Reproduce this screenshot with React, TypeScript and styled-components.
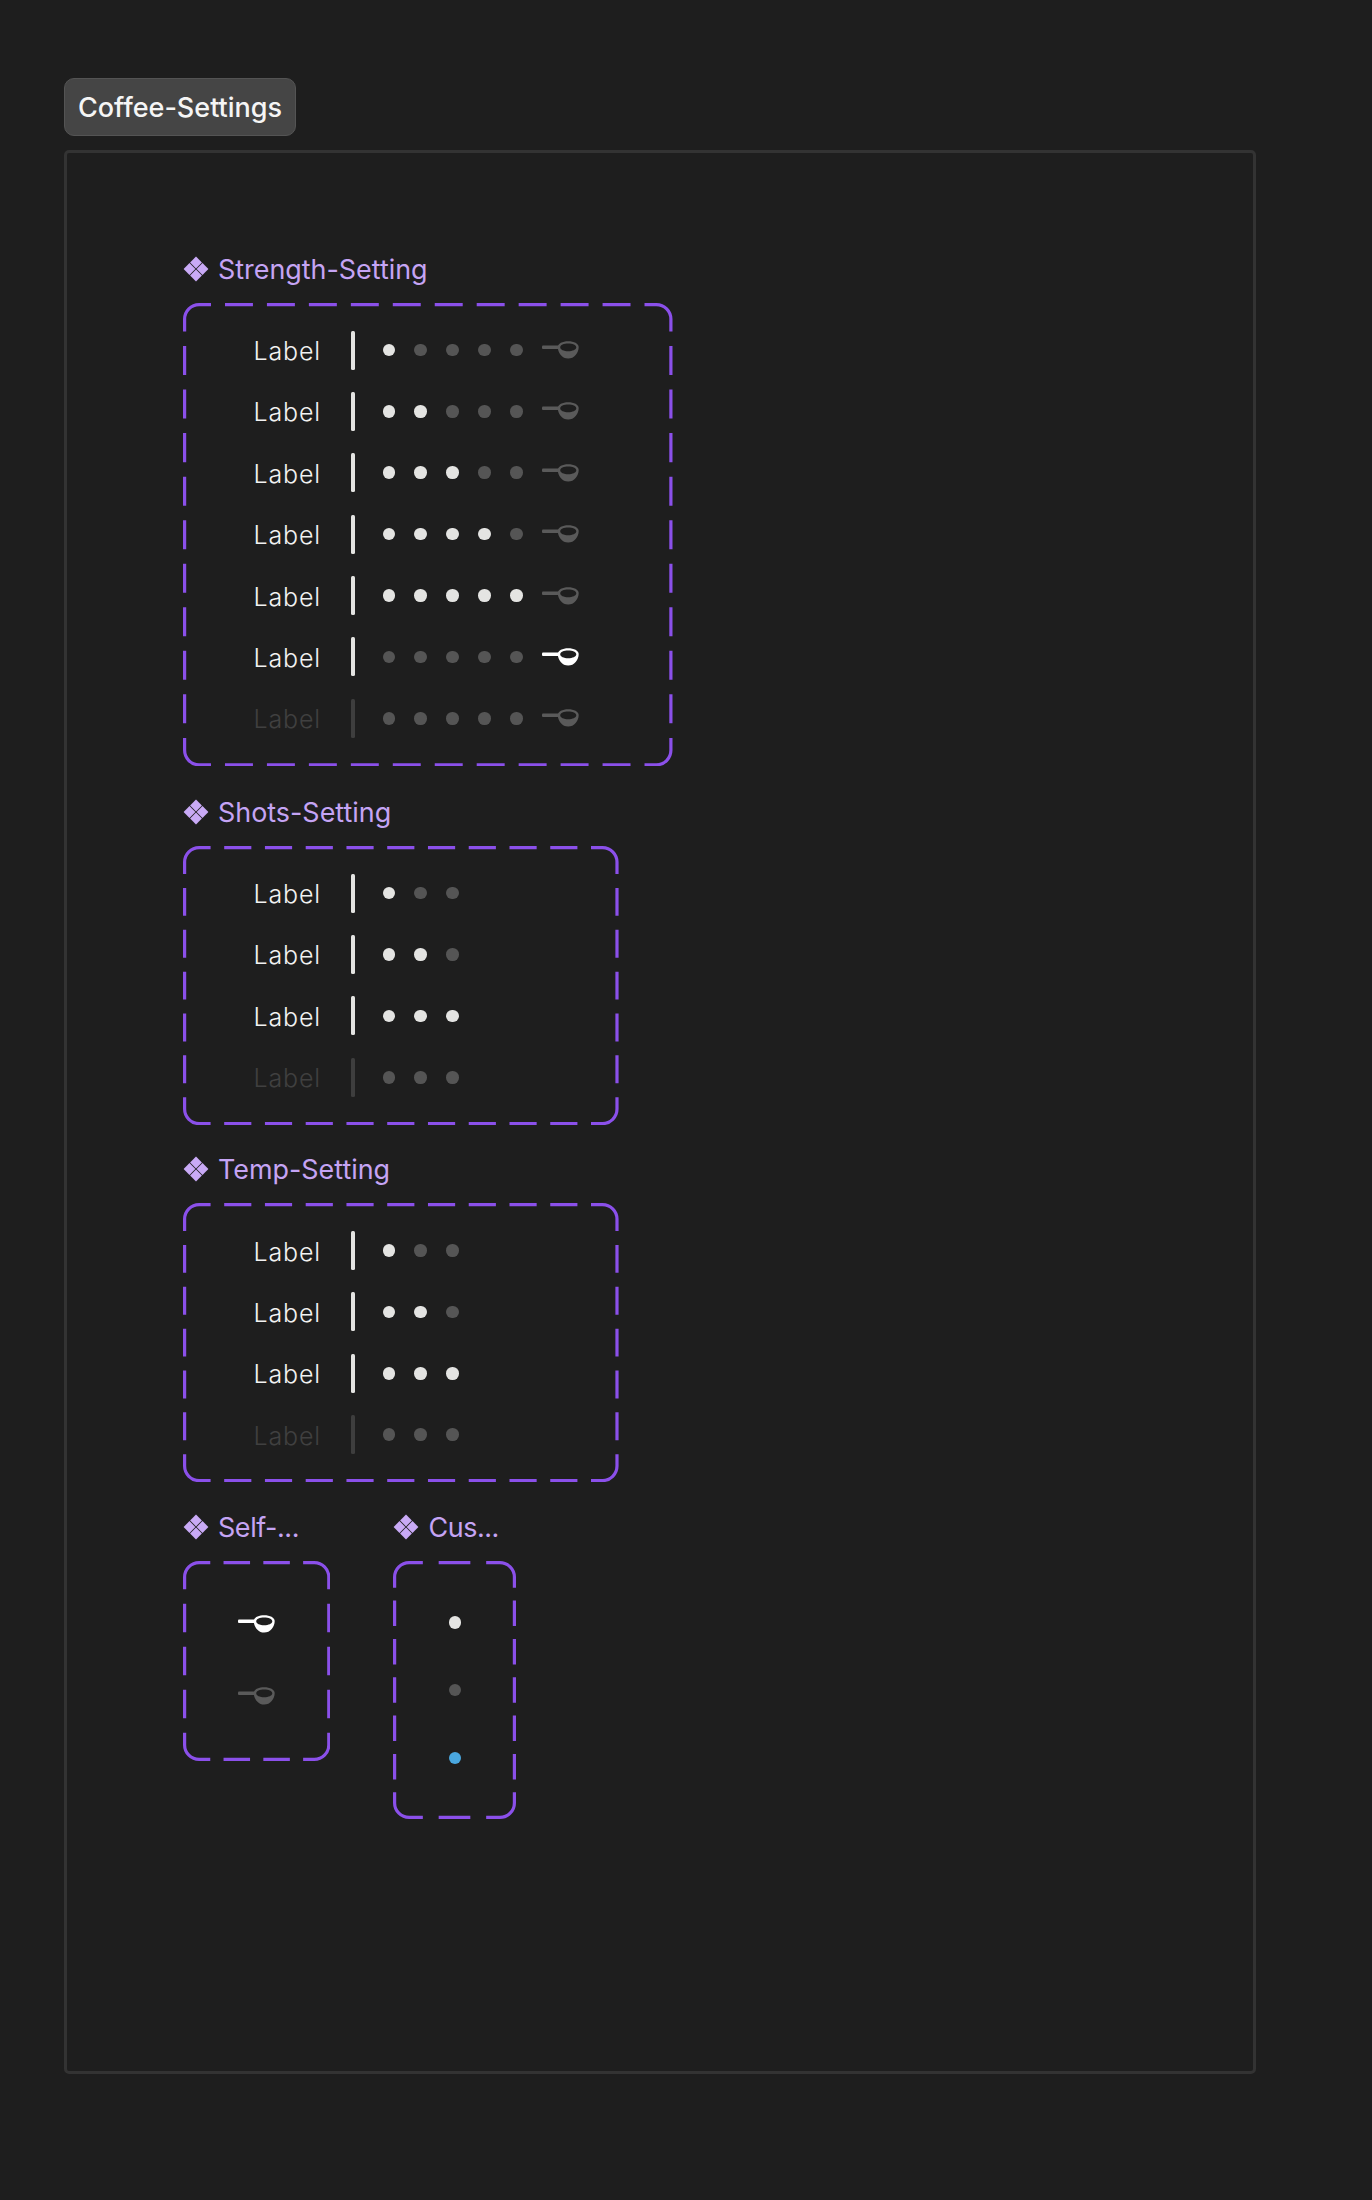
import styled, { createGlobalStyle } from 'styled-components';

const ROW_H = 39;
const ROW_GAP = 22.4;
const BOX_PAD = 28;

const GlobalStyle = createGlobalStyle`
	html, body {
		margin: 0;
		background: #1e1e1e;
	}
	body {
		font-family: Inter, 'Liberation Sans', sans-serif;
	}
`;

// figma fits the dashes per side, centred on each corner, so css dashed won't do
function outlinePath(w: number, h: number) {
	const inset = 1.6;
	const r = 14.5;
	const x0 = inset;
	const y0 = inset;
	const x1 = w - inset;
	const y1 = h - inset;
	const dashFor = (side: number) => {
		const count = Math.floor((side - 28) / 42 + 0.6);
		return { count, dash: (side - 28) / (1.5 * count) };
	};
	const top = dashFor(w);
	const left = dashFor(h);
	const reachX = 14 + top.dash / 2;
	const reachY = 14 + left.dash / 2;
	let d = '';
	d += `M${reachX} ${y0}H${x0 + r}A${r} ${r} 0 0 0 ${x0} ${y0 + r}V${reachY}`;
	d += `M${w - reachX} ${y0}H${x1 - r}A${r} ${r} 0 0 1 ${x1} ${y0 + r}V${reachY}`;
	d += `M${reachX} ${y1}H${x0 + r}A${r} ${r} 0 0 1 ${x0} ${y1 - r}V${h - reachY}`;
	d += `M${w - reachX} ${y1}H${x1 - r}A${r} ${r} 0 0 0 ${x1} ${y1 - r}V${h - reachY}`;
	for (let i = 0; i < top.count - 1; i++) {
		const a = reachX + top.dash / 2 + i * top.dash * 1.5;
		d += `M${a} ${y0}h${top.dash}M${a} ${y1}h${top.dash}`;
	}
	for (let i = 0; i < left.count - 1; i++) {
		const a = reachY + left.dash / 2 + i * left.dash * 1.5;
		d += `M${x0} ${a}v${left.dash}M${x1} ${a}v${left.dash}`;
	}
	return d;
}

function DashedOutline({ w, h }: { w: number; h: number }) {
	return (
		<OutlineSvg width={w} height={h} viewBox={`0 0 ${w} ${h}`}>
			<path d={outlinePath(w, h)} fill="none" stroke="#8b50ea" strokeWidth="3.2" />
		</OutlineSvg>
	);
}

function ComponentIcon() {
	return (
		<TitleIcon viewBox="0 0 26 26">
			<path d="M13 0.6 18.9 6.5 13 12.4 7.1 6.5Z" />
			<path d="M6.5 7.1 12.4 13 6.5 18.9 0.6 13Z" />
			<path d="M19.5 7.1 25.4 13 19.5 18.9 13.6 13Z" />
			<path d="M13 13.6 18.9 19.5 13 25.4 7.1 19.5Z" />
		</TitleIcon>
	);
}

function Scoop({ on }: { on: boolean }) {
	return (
		<ScoopSvg viewBox="0 0 37 18" $on={on}>
			<rect x="0" y="4.6" width="17" height="3.4" rx="1" />
			<path
				fillRule="evenodd"
				d="M15.8 6C15.8 2.4 20.5.2 26.2.2S36.7 2.4 36.7 6C36.7 12 32.2 17.6 26.2 17.6S15.8 12 15.8 6ZM18.2 6.2C18.2 8.6 21.8 10.2 26.2 10.2S34.3 8.6 34.3 6.2 30.6 2.4 26.2 2.4 18.2 3.8 18.2 6.2Z"
			/>
		</ScoopSvg>
	);
}

type SettingRow = { filled: number; scoop?: boolean; disabled?: boolean };

function makeShotRows(): SettingRow[] {
	return [{ filled: 1 }, { filled: 2 }, { filled: 3 }, { filled: 0, disabled: true }];
}

const STRENGTH: SettingRow[] = [
	{ filled: 1 },
	{ filled: 2 },
	{ filled: 3 },
	{ filled: 4 },
	{ filled: 5 },
	{ filled: 0, scoop: true },
	{ filled: 0, disabled: true },
];

function SettingSection({
	title,
	width,
	dots,
	rows,
	withScoop,
}: {
	title: string;
	width: number;
	dots: number;
	rows: SettingRow[];
	withScoop?: boolean;
}) {
	const height = BOX_PAD * 2 + rows.length * ROW_H + (rows.length - 1) * ROW_GAP;
	return (
		<Section>
			<Title>
				<ComponentIcon />
				{title}
			</Title>
			<VariantBox $w={width} $h={height}>
				<DashedOutline w={width} h={height} />
				<RowList>
					{rows.map((row, i) => (
						<Row key={i}>
							<RowLabel $disabled={row.disabled}>Label</RowLabel>
							<Divider $disabled={row.disabled} />
							<Dots>
								{Array.from({ length: dots }).map((_, d) => (
									<Dot key={d} $color={d < row.filled ? '#e4e4e2' : '#555555'} />
								))}
								{withScoop && <Scoop on={!!row.scoop} />}
							</Dots>
						</Row>
					))}
				</RowList>
			</VariantBox>
		</Section>
	);
}

export default function App() {
	return (
		<>
			<GlobalStyle />
			<Page>
				<Badge>Coffee-Settings</Badge>
				<Frame>
					<SettingSection title="Strength-Setting" width={489.5} dots={5} rows={STRENGTH} withScoop />
					<SettingSection title="Shots-Setting" width={435.6} dots={3} rows={makeShotRows()} />
					<SettingSection title="Temp-Setting" width={435.6} dots={3} rows={makeShotRows()} />
					<BottomRow>
						<Section>
							<Title $tight>
								<ComponentIcon />
								Self-...
							</Title>
							<VariantBox $w={147.4} $h={200}>
								<DashedOutline w={147.4} h={200} />
								<ScoopColumn>
									<ScoopSlot>
										<Scoop on />
									</ScoopSlot>
									<ScoopSlot>
										<Scoop on={false} />
									</ScoopSlot>
								</ScoopColumn>
							</VariantBox>
						</Section>
						<Section>
							<Title $tight>
								<ComponentIcon />
								Cus...
							</Title>
							<VariantBox $w={123} $h={258}>
								<DashedOutline w={123} h={258} />
								<DotColumn>
									<Dot $color="#e4e4e2" />
									<Dot $color="#555555" />
									<Dot $color="#4aa8e0" />
								</DotColumn>
							</VariantBox>
						</Section>
					</BottomRow>
				</Frame>
			</Page>
		</>
	);
}

const Page = styled.div`
	box-sizing: border-box;
	min-height: 2200px;
	padding: 78px 0 0 64px;
`;

const Badge = styled.div`
	box-sizing: border-box;
	display: flex;
	align-items: center;
	justify-content: center;
	width: 232px;
	height: 58px;
	margin-bottom: 14px;
	background: #454545;
	border: 1.4px solid #545454;
	border-radius: 10px;
	color: #f5f5f5;
	font-size: 27px;
	font-weight: 500;
`;

const Frame = styled.div`
	box-sizing: border-box;
	display: flex;
	flex-direction: column;
	gap: 26.3px;
	width: 1192px;
	height: 1924px;
	padding: 97.5px 0 0 116px;
	border: 3px solid #333333;
	border-radius: 5px;

	& > :first-child {
		margin-bottom: 1.4px;
	}
`;

const Section = styled.section`
	display: flex;
	flex-direction: column;
	gap: 16px;
`;

const Title = styled.div<{ $tight?: boolean }>`
	display: flex;
	align-items: center;
	gap: 9px;
	height: 36px;
	color: #c5a4f4;
	font-size: 26.9px;
	letter-spacing: ${(p) => (p.$tight ? '-0.4px' : '0')};
	line-height: 36px;
	white-space: nowrap;
`;

const TitleIcon = styled.svg`
	width: 26px;
	height: 26px;
	fill: #c9aaf6;
`;

const VariantBox = styled.div<{ $w: number; $h: number }>`
	position: relative;
	box-sizing: border-box;
	width: ${(p) => p.$w}px;
	height: ${(p) => p.$h}px;
`;

const OutlineSvg = styled.svg`
	position: absolute;
	top: 0;
	left: 0;
`;

const RowList = styled.div`
	display: flex;
	flex-direction: column;
	gap: ${ROW_GAP}px;
	padding: ${BOX_PAD}px 0 ${BOX_PAD}px 70.5px;
`;

const Row = styled.div`
	display: flex;
	align-items: center;
	gap: 28px;
	height: ${ROW_H}px;
`;

const RowLabel = styled.span<{ $disabled?: boolean }>`
	display: flex;
	justify-content: flex-end;
	width: 67.5px;
	margin: 3px 2px 0 0;
	color: ${(p) => (p.$disabled ? '#404040' : '#f2f2f2')};
	font-size: 25px;
	font-weight: 300;
	letter-spacing: 0.85px;
	line-height: 1;
	white-space: nowrap;
`;

const Divider = styled.div<{ $disabled?: boolean }>`
	width: 3.6px;
	height: ${ROW_H}px;
	border-radius: 1.5px;
	background: ${(p) => (p.$disabled ? '#3e3e3e' : '#e4e4e2')};
`;

const Dots = styled.div`
	display: flex;
	align-items: center;
	gap: 19.3px;
`;

const Dot = styled.span<{ $color: string }>`
	display: block;
	width: 12.6px;
	height: 12.6px;
	border-radius: 50%;
	background: ${(p) => p.$color};
`;

const ScoopSvg = styled.svg<{ $on: boolean }>`
	display: block;
	width: 37px;
	height: 18px;
	fill: ${(p) => (p.$on ? '#ffffff' : '#5a5a5a')};
`;

const BottomRow = styled.div`
	display: flex;
	gap: 63px;
`;

const ScoopColumn = styled.div`
	display: flex;
	flex-direction: column;
	align-items: center;
	gap: 33.4px;
	padding: 44px 0;
`;

const ScoopSlot = styled.div`
	display: flex;
	align-items: center;
	height: ${ROW_H}px;
`;

const DotColumn = styled.div`
	display: flex;
	flex-direction: column;
	align-items: center;
	gap: 55.2px;
	padding-top: 55.4px;
`;
